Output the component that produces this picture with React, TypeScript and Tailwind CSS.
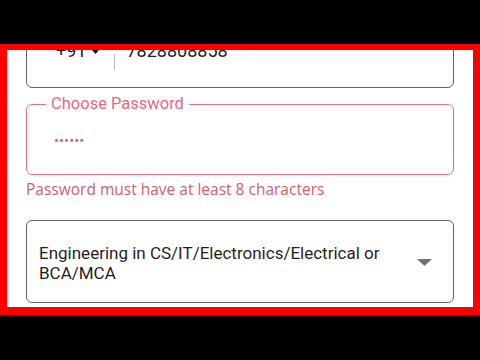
import React from 'react';

const App: React.FC = () => {
  return (
    <div className="h-[360px] w-[480px] bg-black pt-[44px] font-['Roboto',sans-serif]">
      <div className="h-[271px] border-x-[7px] border-t-[6px] border-b-[8px] border-[#ff0000] bg-white overflow-hidden">
        <div className="px-[19px] flex flex-col">
          {/* Phone number box, scrolled partly out of view */}
          <div className="-mt-[24px] h-[62px] rounded-md border-[1.5px] border-[#5f6368] flex items-center pl-[29px] pb-[13px] text-[18px] text-[#222]">
            <span className="flex items-center gap-[2px]">
              +91
              <svg width="13" height="9" viewBox="0 0 13 9" className="ml-[1px]">
                <path d="M0.5 1h12L6.5 8z" fill="#111" />
              </svg>
            </span>
            <span className="ml-[12px] h-[16px] w-px bg-[#b8b8b8] mt-[22px]" />
            <span className="ml-[11px]">7828808858</span>
          </div>

          {/* Password */}
          <div className="relative mt-[16px] h-[71px] rounded-md border-[1.5px] border-[#e0708a] flex items-center pl-[27px]">
            <span className="absolute -top-[12px] left-[19px] bg-white px-[5px] text-[16.5px] leading-[22px] text-[#e06a85]">
              Choose Password
            </span>
            <span className="text-[15px] leading-none text-[#dc6280] mt-[4px]">••••••</span>
          </div>
          <p className="mt-[4px] text-[15.5px] leading-[20px] text-[#cc5e70] font-['Open_Sans',sans-serif]">
            Password must have at least 8 characters
          </p>

          {/* Qualification select */}
          <div className="mt-[21px] h-[83px] rounded-md border-[1.5px] border-[#5f6368] flex items-center pl-[12px] pr-[21px]">
            <span className="flex-1 text-[17px] leading-[20px] text-[#1f1f1f] pt-[2px]">
              Engineering in CS/IT/Electronics/Electrical or
              <br />
              BCA/MCA
            </span>
            <svg width="15" height="7" viewBox="0 0 15 7" className="mt-[2px]">
              <path d="M0 0h15L7.5 7z" fill="#6b7280" />
            </svg>
          </div>
        </div>
      </div>
    </div>
  );
};

export default App;
